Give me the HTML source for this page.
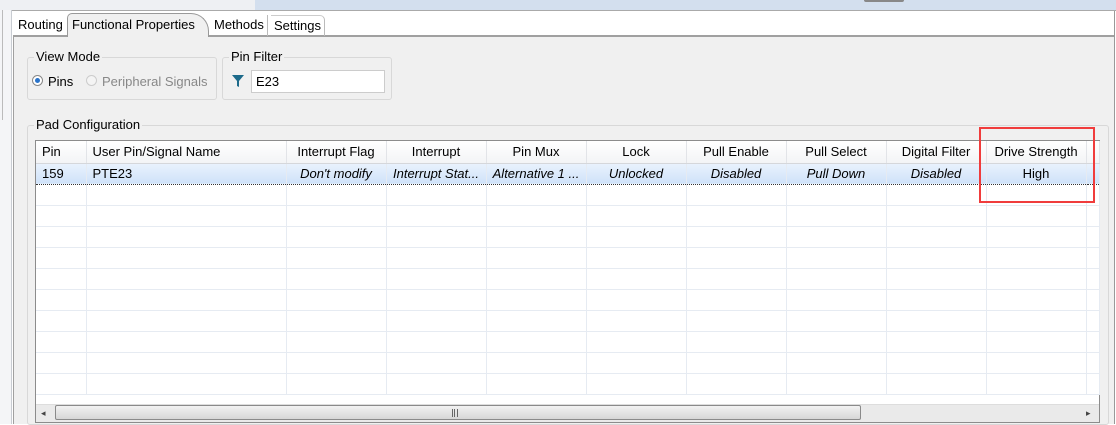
<!DOCTYPE html>
<html><head><style>
*{margin:0;padding:0;box-sizing:border-box}
body{width:1116px;height:424px;overflow:hidden;background:#fff;font-family:"Liberation Sans","Noto Sans CJK SC",sans-serif;font-size:13px;color:#000;position:relative}
.a{position:absolute}
.tab{position:absolute;top:15px;height:21px;line-height:20px;padding:0 3px;font-size:13px}
table{border-collapse:collapse;table-layout:fixed;position:absolute;left:36px;top:141px}
td{height:21px;border-right:1px solid #e6ebf2;border-bottom:1px solid #e6ebf2;font-size:13px;white-space:nowrap;overflow:hidden;text-align:center}
tr.h td{background:linear-gradient(#fff,#f3f4f6);border-right:1px solid #e2e4e8;border-bottom:1px solid #d5d7db;height:22px}
tr.s td{background:linear-gradient(#e9f2fd,#cfe2f9);font-style:italic;border-top:1px dotted #333;border-bottom:1px dotted #333;height:21px}
</style></head><body>
<div class="a" style="left:0;top:0;width:255px;height:10px;background:#eef0f3"></div>
<div class="a" style="left:255px;top:0;width:861px;height:10px;background:#d3dfee"></div>
<div class="a" style="left:864px;top:0;width:40px;height:2px;background:#888;border-radius:0 0 3px 3px"></div>
<div class="a" style="left:0;top:10px;width:12px;height:414px;background:#f4f5f7;border-right:1px solid #c8ccd2"></div>
<div class="a" style="left:2px;top:10px;width:1px;height:110px;background:#bbb"></div>
<div class="a" style="left:12px;top:10px;width:1104px;height:1px;background:#aaa"></div>
<div class="a" style="left:13px;top:11px;width:1102px;height:25px;background:#fff"></div>
<div class="a" style="left:13px;top:35px;width:1102px;height:2px;background:#a0a0a0"></div>
<div class="a" style="left:13px;top:37px;width:1102px;height:387px;background:#f0f0f0;border-left:1px solid #a0a0a0"></div>
<div class="a" style="left:1114px;top:11px;width:1px;height:413px;background:#999"></div>
<div class="tab" style="left:15px">Routing</div>
<div class="a" style="left:67px;top:13px;width:142px;height:24px;background:#f0f0f0;border:1px solid #999;border-bottom:none;border-radius:5px 18px 0 0"></div>
<div class="tab" style="left:69px">Functional Properties</div>
<div class="tab" style="left:211px;border-right:1px solid #bbb">Methods</div>
<div class="tab" style="left:271px;border-right:1px solid #bbb;border-top:1px solid #ccc;border-radius:0 5px 0 0">Settings</div>

<div class="a" style="left:27px;top:57px;width:190px;height:43px;border:1px solid #d8d8d8;border-radius:3px"></div>
<div class="a" style="left:34px;top:49px;background:#f0f0f0;padding:0 2px;font-size:13px">View Mode</div>
<div class="a" style="left:32px;top:75px;width:11px;height:11px;border-radius:50%;border:1px solid #888;background:#fff"></div>
<div class="a" style="left:35px;top:78px;width:5px;height:5px;border-radius:50%;background:#2a73c9"></div>
<div class="a" style="left:48px;top:74px;font-size:13px">Pins</div>
<div class="a" style="left:86px;top:75px;width:11px;height:11px;border-radius:50%;border:1px solid #ccc;background:#f4f4f4"></div>
<div class="a" style="left:102px;top:74px;font-size:13px;color:#888">Peripheral Signals</div>

<div class="a" style="left:222px;top:57px;width:170px;height:43px;border:1px solid #d8d8d8;border-radius:3px"></div>
<div class="a" style="left:229px;top:49px;background:#f0f0f0;padding:0 2px;font-size:13px">Pin Filter</div>
<svg class="a" style="left:231px;top:74px" width="14" height="14"><path d="M1 1h12L8 7v6L6 12V7z" fill="#1d6a8a"/></svg>
<div class="a" style="left:251px;top:70px;width:134px;height:23px;background:#fff;border:1px solid #ccc;padding:3px 4px;font-size:13px">E23</div>

<div class="a" style="left:27px;top:125px;width:1082px;height:300px;border:1px solid #d8d8d8;border-radius:3px"></div>
<div class="a" style="left:34px;top:117px;background:#f0f0f0;padding:0 2px;font-size:13px">Pad Configuration</div>
<div class="a" style="left:35px;top:140px;width:1065px;height:283px;background:#fff;border:1px solid #8c8c8c"></div>
<table>
<colgroup><col style="width:50px"><col style="width:200px"><col style="width:100px"><col style="width:100px"><col style="width:100px"><col style="width:100px"><col style="width:100px"><col style="width:100px"><col style="width:100px"><col style="width:100px"><col style="width:13px"></colgroup>
<tr class="h"><td style="text-align:left;padding-left:6px">Pin</td><td style="text-align:left;padding-left:6px">User Pin/Signal Name</td><td>Interrupt Flag</td><td>Interrupt</td><td>Pin Mux</td><td>Lock</td><td>Pull Enable</td><td>Pull Select</td><td>Digital Filter</td><td>Drive Strength</td><td></td></tr>
<tr class="s"><td style="text-align:left;padding-left:6px;font-style:normal">159</td><td style="text-align:left;padding-left:6px;font-style:normal">PTE23</td><td>Don't modify</td><td>Interrupt Stat...</td><td>Alternative 1 ...</td><td>Unlocked</td><td>Disabled</td><td>Pull Down</td><td>Disabled</td><td style="font-style:normal">High</td><td></td></tr>
<tr><td></td><td></td><td></td><td></td><td></td><td></td><td></td><td></td><td></td><td></td><td></td></tr>
<tr><td></td><td></td><td></td><td></td><td></td><td></td><td></td><td></td><td></td><td></td><td></td></tr>
<tr><td></td><td></td><td></td><td></td><td></td><td></td><td></td><td></td><td></td><td></td><td></td></tr>
<tr><td></td><td></td><td></td><td></td><td></td><td></td><td></td><td></td><td></td><td></td><td></td></tr>
<tr><td></td><td></td><td></td><td></td><td></td><td></td><td></td><td></td><td></td><td></td><td></td></tr>
<tr><td></td><td></td><td></td><td></td><td></td><td></td><td></td><td></td><td></td><td></td><td></td></tr>
<tr><td></td><td></td><td></td><td></td><td></td><td></td><td></td><td></td><td></td><td></td><td></td></tr>
<tr><td></td><td></td><td></td><td></td><td></td><td></td><td></td><td></td><td></td><td></td><td></td></tr>
<tr><td></td><td></td><td></td><td></td><td></td><td></td><td></td><td></td><td></td><td></td><td></td></tr>
<tr><td></td><td></td><td></td><td></td><td></td><td></td><td></td><td></td><td></td><td></td><td></td></tr>
</table>
<div class="a" style="left:36px;top:404px;width:1063px;height:18px;background:#eaeaea;border-top:1px solid #ddd"></div>
<div class="a" style="left:41px;top:408px;font-size:9px;color:#444">◂</div>
<div class="a" style="left:1086px;top:408px;font-size:9px;color:#444">▸</div>
<div class="a" style="left:55px;top:405px;width:806px;height:15px;border:1px solid #8a8a8a;border-radius:2px;background:linear-gradient(#f2f2f2,#d6d6d6)"></div>
<div class="a" style="left:452px;top:409px;width:6px;height:8px;border-left:1px solid #666;border-right:1px solid #666"></div>
<div class="a" style="left:454px;top:409px;width:1px;height:8px;background:#666"></div>
<div class="a" style="left:979px;top:127px;width:116px;height:76px;border:2px solid #f03c3c"></div>
</body></html>
